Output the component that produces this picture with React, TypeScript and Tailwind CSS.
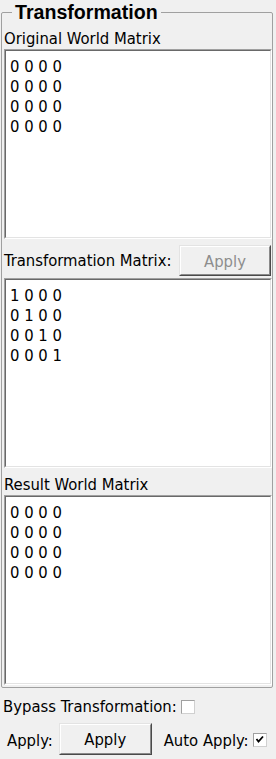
import React from "react";

const Sunken = ({ lines }: { lines: string[] }) => (
  <div className="h-[190px] border border-t-[#a0a0a0] border-l-[#a0a0a0] border-b-white border-r-white">
    <div className="h-full border border-t-[#696969] border-l-[#696969] border-b-[#e3e3e3] border-r-[#e3e3e3] bg-white pl-[4px] pt-[6px] leading-[20px] text-black">
      {lines.map((l, i) => (
        <div key={i}>{l}</div>
      ))}
    </div>
  </div>
);

const Btn = ({ disabled, className }: { disabled?: boolean; className?: string }) => (
  <div
    className={
      "border border-t-[#e3e3e3] border-l-[#e3e3e3] border-b-[#4a4a4a] border-r-[#4a4a4a] " +
      (className ?? "")
    }
  >
    <div
      className={
        "flex h-full items-center justify-center border border-t-white border-l-white border-b-[#8a8a8a] border-r-[#8a8a8a] bg-[#f0f0f0] pt-[2px] leading-[18px] " +
        (disabled ? "text-[#8d8d8d]" : "text-black")
      }
    >
      Apply
    </div>
  </div>
);

const Check = ({ checked }: { checked?: boolean }) => (
  <div className="h-[14px] w-[14px] border border-t-[#a0a0a0] border-l-[#a0a0a0] border-b-[#d0d0d0] border-r-[#d0d0d0] bg-white">
    {checked && (
      <svg width="12" height="12" viewBox="0 0 12 12" className="block">
        <path d="M2.5 5 L4.5 7.5 L9 2.5" stroke="#000" strokeWidth="1.8" fill="none" />
      </svg>
    )}
  </div>
);

export default function App() {
  return (
    <div
      className="h-[759px] w-[276px] overflow-hidden bg-[#f0f0f0] text-[16.5px] text-black"
      style={{ fontFamily: '"DejaVu Sans", Tahoma, sans-serif', fontStretch: "condensed" }}
    >
      <fieldset className="ml-[1px] w-[272px] rounded-[2px] border border-[#a0a0a0] pb-[2px] pl-[2px]">
        <legend
          className="ml-[8px] px-[3px] text-[19.6px] font-bold leading-[24px]"
          style={{ fontFamily: '"Liberation Sans", Arial, sans-serif', fontStretch: "normal" }}
        >
          Transformation
        </legend>
        <div className="h-[25px] pt-[6px] leading-[18px]">Original World Matrix</div>
        <Sunken lines={["0 0 0 0", "0 0 0 0", "0 0 0 0", "0 0 0 0"]} />
        <div className="mt-[6px] flex h-[31px] items-center justify-between pr-[1px]">
          <span className="pt-[1px] leading-[18px]">Transformation Matrix:</span>
          <Btn disabled className="h-[31px] w-[92px]" />
        </div>
        <div className="mt-[2px]">
          <Sunken lines={["1 0 0 0", "0 1 0 0", "0 0 1 0", "0 0 0 1"]} />
        </div>
        <div className="h-[27px] pt-[8px] leading-[18px]">Result World Matrix</div>
        <Sunken lines={["0 0 0 0", "0 0 0 0", "0 0 0 0", "0 0 0 0"]} />
      </fieldset>
      <div className="mt-[10px] flex h-[18px] items-center pl-[3px]">
        <span className="leading-[18px]">Bypass Transformation:</span>
        <div className="ml-[4px]">
          <Check />
        </div>
      </div>
      <div className="mt-[7px] flex h-[32px] items-center">
        <span className="ml-[7px] pt-[3px] leading-[18px]">Apply:</span>
        <Btn className="ml-[6px] h-[32px] w-[93px]" />
        <span className="ml-[12px] pt-[3px] leading-[18px]">Auto Apply:</span>
        <div className="ml-[4px] mt-[1px]">
          <Check checked />
        </div>
      </div>
    </div>
  );
}
